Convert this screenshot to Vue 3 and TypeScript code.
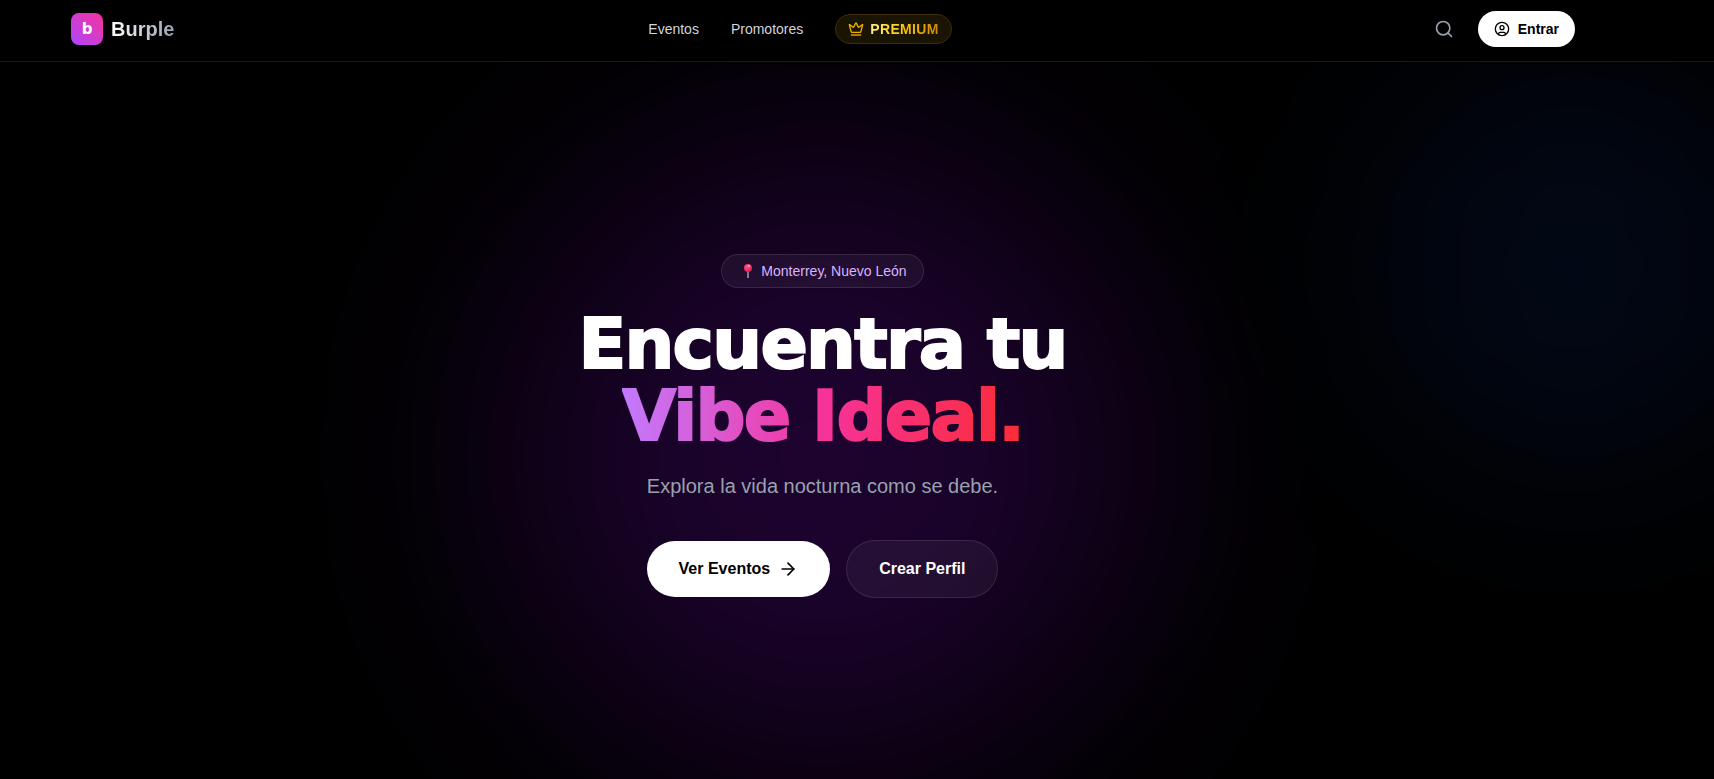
<script setup lang="ts">
interface NavLink {
  label: string
  href: string
}

const links: NavLink[] = [
  { label: 'Eventos', href: '#eventos' },
  { label: 'Promotores', href: '#promotores' },
]
</script>

<template>
  <div class="page">
    <header class="bar">
      <div class="bar-inner">
        <a class="brand" href="#inicio">
          <span class="brand-mark">b</span>
          <span class="brand-name">Burple</span>
        </a>
        <nav class="nav">
          <a v-for="link in links" :key="link.label" class="nav-link" :href="link.href">{{ link.label }}</a>
          <a class="premium" href="#premium">
            <svg class="icon-16" viewBox="0 0 24 24" fill="none" stroke-width="2" stroke-linecap="round" stroke-linejoin="round" aria-hidden="true">
              <path stroke="#efb100" d="M11.562 3.266a.5.5 0 0 1 .876 0L15.39 8.87a1 1 0 0 0 1.516.294L21.183 5.5a.5.5 0 0 1 .798.519l-2.834 10.246a1 1 0 0 1-.956.734H5.81a1 1 0 0 1-.957-.734L2.02 6.02a.5.5 0 0 1 .798-.519l4.276 3.664a1 1 0 0 0 1.516-.294z" />
              <path stroke="#d99f04" d="M5 21h14" />
            </svg>
            <span class="premium-label">PREMIUM</span>
          </a>
        </nav>
        <div class="actions">
          <button class="search" type="button" aria-label="Buscar">
            <svg class="icon-20" viewBox="0 0 24 24" fill="none" stroke="currentColor" stroke-width="2" stroke-linecap="round" stroke-linejoin="round" aria-hidden="true">
              <circle cx="11" cy="11" r="8" />
              <path d="m21 21-4.3-4.3" />
            </svg>
          </button>
          <button class="login" type="button">
            <svg class="icon-16" viewBox="0 0 24 24" fill="none" stroke="currentColor" stroke-width="2" stroke-linecap="round" stroke-linejoin="round" aria-hidden="true">
              <circle cx="12" cy="12" r="10" />
              <circle cx="12" cy="10" r="3" />
              <path d="M7 20.662V19a2 2 0 0 1 2-2h6a2 2 0 0 1 2 2v1.662" />
            </svg>
            Entrar
          </button>
        </div>
      </div>
    </header>

    <main class="hero">
      <div class="glow glow-purple"></div>
      <div class="glow glow-blue"></div>
      <div class="hero-content">
        <p class="place">
          <svg class="pin" viewBox="0 0 19 18" aria-hidden="true">
            <defs>
              <radialGradient id="pin-head" cx="0.4" cy="0.3" r="0.7">
                <stop offset="0" stop-color="#ff5a7c" />
                <stop offset="0.5" stop-color="#f5376a" />
                <stop offset="1" stop-color="#d61f55" />
              </radialGradient>
            </defs>
            <rect x="9" y="8" width="2" height="8" fill="#84788c" />
            <circle cx="10" cy="6" r="4" fill="url(#pin-head)" />
            <circle cx="11" cy="4" r="1" fill="#ffb0bd" />
          </svg>
          <span>Monterrey, Nuevo León</span>
        </p>
        <h1 class="title">
          <span>Encuentra tu</span>
          <span class="title-accent">Vibe Ideal.</span>
        </h1>
        <p class="lead">Explora la vida nocturna como se debe.</p>
        <div class="cta">
          <a class="btn btn-solid" href="#eventos">
            Ver Eventos
            <svg class="icon-20" viewBox="0 0 24 24" fill="none" stroke="currentColor" stroke-width="2" stroke-linecap="round" stroke-linejoin="round" aria-hidden="true">
              <path d="M5 12h14" />
              <path d="m12 5 7 7-7 7" />
            </svg>
          </a>
          <a class="btn btn-ghost" href="#perfil">Crear Perfil</a>
        </div>
      </div>
    </main>
  </div>
</template>

<style>
body {
  background: #000;
}
</style>

<style scoped>
.page {
  display: flex;
  flex-direction: column;
  min-height: 100vh;
  overflow: hidden;
  background: #000;
  color: #fff;
  font-family: "Liberation Sans", Arial, sans-serif;
}

a {
  color: inherit;
  text-decoration: none;
}

button {
  border: 0;
  font-family: inherit;
  cursor: pointer;
}

.icon-16 {
  flex: none;
  width: 16px;
  height: 16px;
}

.icon-20 {
  flex: none;
  width: 20px;
  height: 20px;
}

.bar {
  position: relative;
  z-index: 1;
  padding: 11px 139px 14px 71px;
  border-bottom: 1px solid #1a1a1a;
  background: #000;
}

.bar-inner {
  display: flex;
  align-items: center;
  justify-content: space-between;
}

.brand {
  display: flex;
  align-items: center;
  gap: 8px;
}

.brand-mark {
  display: flex;
  align-items: center;
  justify-content: center;
  width: 32px;
  height: 32px;
  border-radius: 8px;
  background: linear-gradient(to top right, #ad46ff, #f6339a);
  font-family: "DejaVu Sans", "Liberation Sans", sans-serif;
  font-size: 15px;
  font-weight: 700;
  line-height: 24px;
}

.brand-name {
  background: linear-gradient(to right, #fff, #99a1af);
  background-clip: text;
  color: transparent;
  font-size: 20px;
  font-weight: 700;
  line-height: 28px;
}

.nav {
  display: flex;
  align-items: center;
  gap: 32px;
  font-size: 14px;
  line-height: 20px;
}

.nav-link {
  color: #d1d5dc;
}

.premium {
  display: flex;
  align-items: center;
  gap: 6px;
  padding: 4px 12px;
  border: 1px solid #3d2e05;
  border-radius: 15px;
  background: #1a1402;
}

.premium-label {
  background: linear-gradient(to right, #fff085, #fcc800 50%, #d08700);
  background-clip: text;
  color: transparent;
  font-weight: 700;
  letter-spacing: 0.025em;
}

.actions {
  display: flex;
  align-items: center;
  gap: 16px;
}

.search {
  display: flex;
  padding: 8px;
  background: transparent;
  color: #99a1af;
}

.login {
  display: flex;
  align-items: center;
  gap: 8px;
  padding: 8px 16px;
  border-radius: 18px;
  background: #fff;
  color: #000;
  font-size: 14px;
  font-weight: 700;
  line-height: 20px;
}

.hero {
  position: relative;
  display: flex;
  flex: 1;
  flex-direction: column;
  align-items: center;
  padding: 192px 69px 64px 0;
}

.glow {
  position: absolute;
  border-radius: 50%;
}

.glow-purple {
  top: 84px;
  left: calc(50% - 344px);
  width: 620px;
  height: 620px;
  background: rgb(152 16 250 / 19%);
  filter: blur(120px);
}

.glow-blue {
  top: 4px;
  right: -60px;
  width: 400px;
  height: 400px;
  background: rgb(21 93 252 / 9%);
  filter: blur(100px);
}

.hero-content {
  position: relative;
  display: flex;
  flex-direction: column;
  align-items: center;
  text-align: center;
}

.place {
  display: flex;
  align-items: center;
  gap: 4px;
  margin: 0 0 20px;
  padding: 6px 16px;
  border: 1px solid rgb(255 255 255 / 10%);
  border-radius: 17px;
  background: rgb(255 255 255 / 5%);
  color: #dab2ff;
  font-size: 14px;
  line-height: 20px;
}

.pin {
  width: 19px;
  height: 18px;
}

.title {
  display: flex;
  flex-direction: column;
  align-items: center;
  margin: 0 0 20px;
  font-family: "DejaVu Sans", "Liberation Sans", sans-serif;
  font-size: 70px;
  font-weight: 900;
  letter-spacing: -0.025em;
  line-height: 72px;
  -webkit-text-stroke: 2px currentColor;
}

.title-accent {
  background: linear-gradient(to right, #c27aff, #f6339a 50%, #fb2c36);
  background-clip: text;
  color: transparent;
}

.lead {
  margin: 0 0 40px;
  color: #99a1af;
  font-size: 20px;
  line-height: 28px;
}

.cta {
  display: flex;
  align-items: center;
  gap: 16px;
}

.btn {
  display: flex;
  align-items: center;
  gap: 8px;
  padding: 16px 32px;
  border-radius: 29px;
  font-size: 16px;
  font-weight: 700;
  line-height: 24px;
}

.btn-solid {
  background: #fff;
  color: #000;
}

.btn-ghost {
  border: 1px solid rgb(255 255 255 / 10%);
  background: rgb(255 255 255 / 5%);
}
</style>
